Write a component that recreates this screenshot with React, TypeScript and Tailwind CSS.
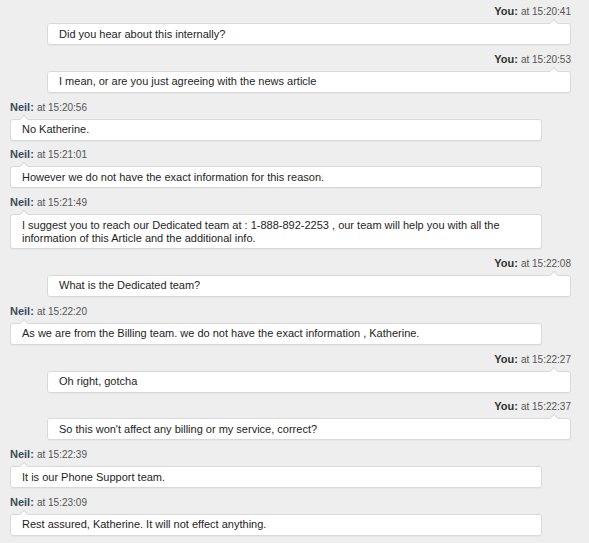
type Message = {
  from: "you" | "neil";
  time: string;
  text: string;
};

const messages: Message[] = [
  { from: "you", time: "15:20:41", text: "Did you hear about this internally?" },
  { from: "you", time: "15:20:53", text: "I mean, or are you just agreeing with the news article" },
  { from: "neil", time: "15:20:56", text: "No Katherine." },
  { from: "neil", time: "15:21:01", text: "However we do not have the exact information for this reason." },
  {
    from: "neil",
    time: "15:21:49",
    text: "I suggest you to reach our Dedicated team at : 1-888-892-2253 , our team will help you with all the information of this Article and the additional info.",
  },
  { from: "you", time: "15:22:08", text: "What is the Dedicated team?" },
  {
    from: "neil",
    time: "15:22:20",
    text: "As we are from the Billing team. we do not have the exact information , Katherine.",
  },
  { from: "you", time: "15:22:27", text: "Oh right, gotcha" },
  { from: "you", time: "15:22:37", text: "So this won't affect any billing or my service, correct?" },
  { from: "neil", time: "15:22:39", text: "It is our Phone Support team." },
  { from: "neil", time: "15:23:09", text: "Rest assured, Katherine. It will not effect anything." },
];

function ChatMessage({ message }: { message: Message }) {
  const mine = message.from === "you";

  return (
    <div className={`mb-[6.8px] flex flex-col ${mine ? "items-end pl-[37px]" : "items-start pr-[29px]"}`}>
      <div className="h-[14px] text-[11px] leading-[14px]">
        <span className={`font-bold ${mine ? "text-[#333333]" : "text-[#3b4b60]"}`}>
          {mine ? "You:" : "Neil:"}
        </span>{" "}
        <span className="text-[10px] text-[#555555]">at {message.time}</span>
      </div>
      <div className="relative mt-[5px] w-full rounded-[3px] border border-[#d9d9d9] bg-white px-[11px] py-[3.5px] text-[11px] leading-[13px] text-[#1e1e1e] shadow-[0_1px_0_rgba(0,0,0,0.03)]">
        <span
          className={`absolute top-[-4px] h-[6px] w-[6px] rotate-45 border-l border-t border-[#d9d9d9] bg-white ${
            mine ? "right-[13px]" : "left-[10px]"
          }`}
        />
        <p className="relative">{message.text}</p>
      </div>
    </div>
  );
}

export default function App() {
  return (
    <div className="min-h-screen bg-[#eeeeee] pl-[10px] pr-[18px] pt-[4px] font-['Liberation_Sans',Arial,sans-serif]">
      {messages.map((m) => (
        <ChatMessage key={m.time} message={m} />
      ))}
    </div>
  );
}
